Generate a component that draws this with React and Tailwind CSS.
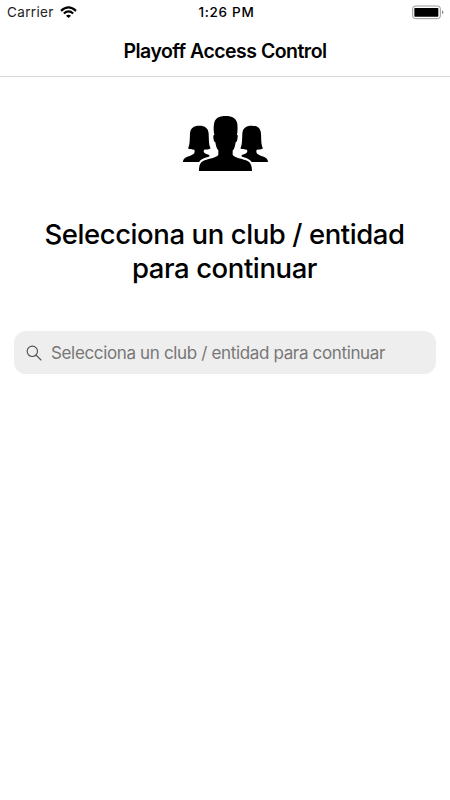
function WifiIcon() {
  return (
    <svg viewBox="0 0 51 36" className="w-[17px] h-3 shrink-0" fill="none" stroke="#000" strokeWidth="6.500">
      <path d="M3 14.5Q25.500 -6 48 14.500" />
      <path d="M11.500 22.500Q25.500 10 39.500 22.500" />
      <path d="M18 29Q25.500 23 33 29L25.500 36Z" fill="#000" stroke="none" />
    </svg>
  )
}

function BatteryIcon() {
  return (
    <svg viewBox="0 0 96 45" className="w-8 h-[15px]">
      <rect x="2" y="3" width="83" height="38" rx="8" fill="#fff" stroke="#999" strokeWidth="3" />
      <rect x="7" y="9" width="72" height="26" rx="2" />
      <path d="M90 16v12q4-2 4-6t-4-6z" fill="#888" />
    </svg>
  )
}

function PeopleIcon() {
  const woman =
    'M39 171C39 160 48 156 61 152C69 149 74 147 74 139L73 134C66 134 58 134 54 130C60 118 59 105 60 86C61 69 71 62 88 62C105 62 115 69 116 86C117 106 116 118 122 130C118 134 110 134 102 134L101 139C101 145 108 147 118 150L118 171Z'

  return (
    <svg viewBox="36 30 261 174" className="w-[87px] h-[58px]">
      <path d={woman} />
      <path d={woman} transform="matrix(-1 0 0 1 333 0)" />
      <path
        d="M87 198C87 180 91 171 104 166C119 160 141 158 145 149L145 136C139 131 138 122 136 112C132 111 130 103 130 95C130 91 131 90 133 90C131 79 130 69 132 57C134 40 147 33 167 33C187 33 200 41 202 57C203 69 203 79 201 90C203 90 204 92 203 96C202 104 201 111 197 112C195 122 194 131 188 137L188 149C192 158 213 160 228 166C241 171 246 181 246 198Z"
        stroke="#fff"
        strokeWidth="14"
        paintOrder="stroke"
      />
    </svg>
  )
}

function SearchIcon() {
  return (
    <svg viewBox="0 0 48 48" className="w-4 h-4 shrink-0" fill="none" stroke="#555" strokeWidth="3.500">
      <circle cx="19" cy="19" r="15.500" />
      <path d="M30 30L45 45" strokeLinecap="round" />
    </svg>
  )
}

function StatusBar() {
  return (
    <div className="grid grid-cols-3 items-center h-6 pl-[7px] pr-1.5">
      <div className="flex items-center gap-1.5">
        <span className="text-[13.500px] tracking-[0.350px] text-[#222]">Carrier</span>
        <WifiIcon />
      </div>
      <span className="pl-0.5 text-center text-[13.500px] font-medium tracking-[0.700px]">1:26 PM</span>
      <div className="flex justify-end">
        <BatteryIcon />
      </div>
    </div>
  )
}

export default function App() {
  return (
    <div className="min-h-[800px] bg-white text-black font-[Inter,sans-serif]">
      <StatusBar />
      <header className="flex items-center justify-center h-[53px] pt-[3px] border-b border-[#d8d8d8]">
        <h1 className="text-[19.500px] font-semibold tracking-[-0.520px]">Playoff Access Control</h1>
      </header>
      <main className="flex flex-col items-center px-3.5 pt-[38px]">
        <PeopleIcon />
        <h2 className="mt-11 pr-px text-center text-[27.500px] leading-[34px] font-medium tracking-[-0.420px]">
          Selecciona un club / entidad
          <br />
          para continuar
        </h2>
        <label className="flex items-center w-full h-[43px] mt-[46px] px-3 gap-[9px] rounded-xl bg-[#eee]">
          <SearchIcon />
          <input
            type="text"
            placeholder="Selecciona un club / entidad para continuar"
            className="flex-1 min-w-0 pt-0.5 bg-transparent outline-none text-[17px] tracking-[-0.350px] placeholder:text-[#777]"
          />
        </label>
      </main>
    </div>
  )
}
